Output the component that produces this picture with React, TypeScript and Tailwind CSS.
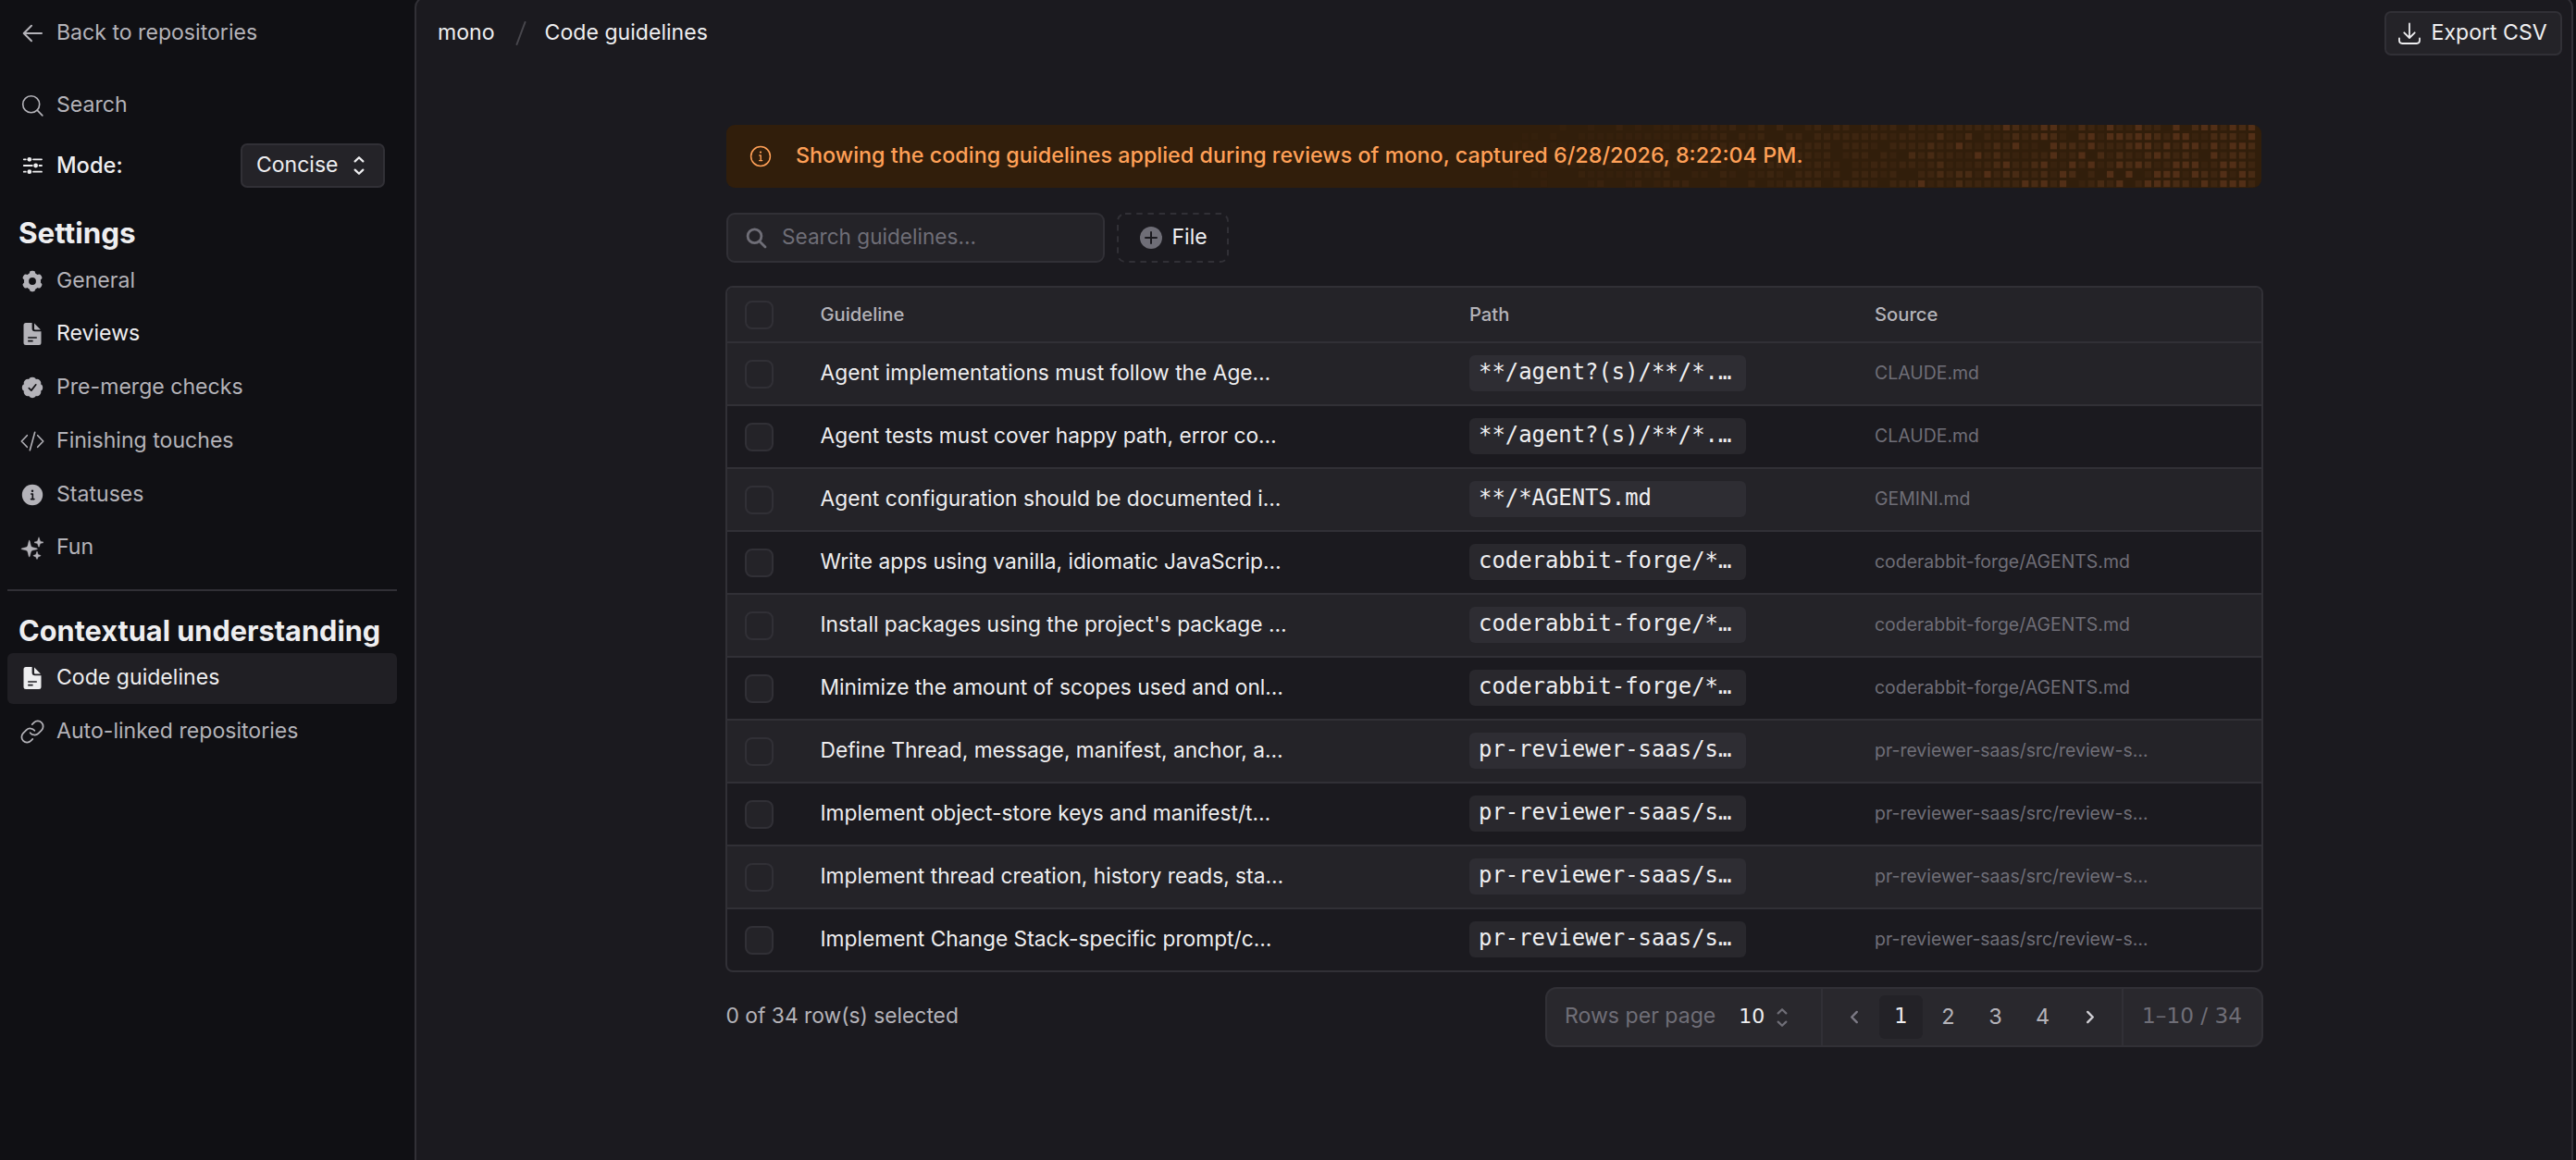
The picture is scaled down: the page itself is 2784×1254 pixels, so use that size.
import type { ReactNode } from "react";
import { Link as LinkIcon } from "lucide-react";
import { clsx } from "clsx";

interface Guideline {
  title: string;
  path: string;
  source: string;
}

const GUIDELINES: Guideline[] = [
  { title: "Agent implementations must follow the Age…", path: "**/agent?(s)/**/*.…", source: "CLAUDE.md" },
  { title: "Agent tests must cover happy path, error co…", path: "**/agent?(s)/**/*.…", source: "CLAUDE.md" },
  { title: "Agent configuration should be documented i…", path: "**/*AGENTS.md", source: "GEMINI.md" },
  { title: "Write apps using vanilla, idiomatic JavaScrip…", path: "coderabbit-forge/*…", source: "coderabbit-forge/AGENTS.md" },
  { title: "Install packages using the project's package …", path: "coderabbit-forge/*…", source: "coderabbit-forge/AGENTS.md" },
  { title: "Minimize the amount of scopes used and onl…", path: "coderabbit-forge/*…", source: "coderabbit-forge/AGENTS.md" },
  { title: "Define Thread, message, manifest, anchor, a…", path: "pr-reviewer-saas/s…", source: "pr-reviewer-saas/src/review-s…" },
  { title: "Implement object-store keys and manifest/t…", path: "pr-reviewer-saas/s…", source: "pr-reviewer-saas/src/review-s…" },
  { title: "Implement thread creation, history reads, sta…", path: "pr-reviewer-saas/s…", source: "pr-reviewer-saas/src/review-s…" },
  { title: "Implement Change Stack-specific prompt/c…", path: "pr-reviewer-saas/s…", source: "pr-reviewer-saas/src/review-s…" },
];

/* ---------- icons ---------- */

function Icon({ children, className }: { children: ReactNode; className?: string }) {
  return (
    <svg
      viewBox="0 0 24 24"
      fill="none"
      stroke="currentColor"
      strokeWidth={1.8}
      strokeLinecap="round"
      strokeLinejoin="round"
      className={clsx("size-6 shrink-0 overflow-visible", className)}
    >
      {children}
    </svg>
  );
}

const ArrowLeftIcon = () => (
  <Icon>
    <path d="M22 12H2.8M11 3.8 2.7 12l8.3 8.2" strokeWidth={2} />
  </Icon>
);

const SearchIcon = () => (
  <Icon>
    <circle cx="10.7" cy="10.7" r="9" strokeWidth={1.6} />
    <path d="m17.2 17.2 5.6 5.6" strokeWidth={1.7} />
  </Icon>
);

const SlidersIcon = () => (
  <Icon>
    <path d="M2.8 5.3h2M13 5.3h9M2.8 12h9M19.6 12H22M2.8 18.7h2M13 18.7h9" />
    <g fill="currentColor" stroke="none">
      <circle cx="8.8" cy="5.3" r="2.4" />
      <circle cx="15.6" cy="12" r="2.4" />
      <circle cx="8.8" cy="18.7" r="2.4" />
    </g>
  </Icon>
);

const GearIcon = () => (
  <Icon>
    <circle cx="12" cy="12" r="6.5" strokeWidth={5.2} />
    <g fill="currentColor" stroke="none">
      {[0, 60, 120, 180, 240, 300].map((a) => (
        <rect key={a} x="8.8" y="0.8" width="6.4" height="6" rx="2.4" transform={`rotate(${a} 12 12)`} />
      ))}
    </g>
  </Icon>
);

const FileIcon = () => (
  <Icon>
    <g stroke="none" fill="currentColor">
      <path
        fillRule="evenodd"
        d="M5 0h6.6v6.3a3 3 0 0 0 3 3h6.9v12.2a2.5 2.5 0 0 1-2.5 2.5H5a2.5 2.5 0 0 1-2.5-2.5v-19A2.5 2.5 0 0 1 5 0Zm2.2 15.2v1.6h9.6v-1.6Zm0 3.6v1.6h5.4v-1.6Z"
      />
      <path d="M14 .6 21 7.4H15a1 1 0 0 1-1-1Z" />
    </g>
  </Icon>
);

const BadgeCheckIcon = () => (
  <Icon>
    <g stroke="none" fill="currentColor">
      <circle cx="12" cy="12" r="9.8" />
      {[0, 45, 90, 135, 180, 225, 270, 315].map((a) => (
        <circle key={a} cx="12" cy="4.9" r="4.1" transform={`rotate(${a} 12 12)`} />
      ))}
    </g>
    <path d="m8.3 12.6 2.5 2.5 5-6.3" stroke="#101014" strokeWidth={1.7} />
  </Icon>
);

const CodeIcon = () => (
  <Icon>
    <path d="M6.3 5.7.3 12l6 6.3M17.7 5.7l6 6.3-6 6.3M14.7 2.3 9.3 21.7" strokeWidth={1.6} />
  </Icon>
);

const InfoFilledIcon = () => (
  <Icon>
    <circle cx="12" cy="12" r="11.2" fill="currentColor" stroke="none" />
    <path d="M10.7 11h1.6v5.5M10.5 16.6h3.4" stroke="#101014" strokeWidth={1.6} />
    <circle cx="12" cy="7.8" r="1.2" fill="#101014" stroke="none" />
  </Icon>
);

const SparklesIcon = () => (
  <Icon>
    <g fill="currentColor" stroke="currentColor" strokeWidth={0.5}>
      <path d="M8.7 4.3c.9 0 1 5.6 2.4 6.8 1.3 1.3 6.4 1.3 6.4 2.2s-5.1 1-6.4 2.2c-1.4 1.3-1.5 6.5-2.4 6.5s-1.1-5.2-2.4-6.5C5 14.3 0 14.2 0 13.3s5-1 6.3-2.2c1.3-1.2 1.5-6.8 2.4-6.8Z" />
      <path d="M19 1.2c.7 0 .8 3 1.5 3.7.6.6 3.5.8 3.5 1.4s-2.9.8-3.5 1.4c-.7.7-.8 3.6-1.5 3.6s-.8-2.9-1.5-3.6C16.9 7.1 14 7 14 6.300s2.900-.8 3.500-1.400c.7-.7.8-3.700 1.500-3.700Z" />
      <path d="M17 16.5c.6 0 .7 2.4 1.3 3 .6.5 2.700.6 2.700 1.200s-2.200.7-2.700 1.200c-.6.6-.7 2.700-1.300 2.700s-.7-2.100-1.300-2.700c-.5-.5-2.700-.6-2.700-1.200s2.200-.7 2.700-1.200c.6-.6.7-3 1.300-3Z" />
    </g>
  </Icon>
);

const DownloadIcon = () => (
  <Icon>
    <path d="M12 1.5v15.300M6.300 11.300l5.700 5.700 5.700-5.700M1 17.500v2.300A3.200 3.200 0 0 0 4.200 23h15.600a3.200 3.200 0 0 0 3.200-3.200v-2.300" />
  </Icon>
);

const InfoIcon = () => (
  <Icon>
    <circle cx="12" cy="12" r="10.4" strokeWidth={1.5} />
    <path d="M10.8 11h1.4v5.6M10.7 16.6h3" strokeWidth={1.4} />
    <circle cx="12" cy="7.6" r="1.1" fill="currentColor" stroke="none" />
  </Icon>
);

function UpDownIcon({ className }: { className?: string }) {
  return (
    <svg
      viewBox="0 0 12 20"
      fill="none"
      stroke="currentColor"
      strokeWidth={2.2}
      strokeLinecap="round"
      strokeLinejoin="round"
      className={clsx("h-5 w-3", className)}
    >
      <path d="M1.7 5.4 6 1.2l4.3 4.2M1.7 14.6 6 18.8l4.3-4.2" />
    </svg>
  );
}

/* ---------- sidebar ---------- */

interface NavItemProps {
  icon: ReactNode;
  label: string;
  active?: boolean;
  bright?: boolean;
}

function NavItem({ icon, label, active, bright }: NavItemProps) {
  return (
    <a
      className={clsx(
        "flex h-[55px] items-center gap-[14px] rounded-[6px] pl-[15px]",
        active ? "bg-[#201f24] text-[#eeeef0]" : "text-[#b4b3b9]",
      )}
    >
      {icon}
      <span className={clsx("-mt-[2px]", bright && "text-[#eeeef0]")}>{label}</span>
    </a>
  );
}

function Sidebar() {
  return (
    <aside className="flex w-[448px] shrink-0 flex-col pl-2 pr-[19px] pt-2 text-[23.1px] leading-7">
      <NavItem icon={<ArrowLeftIcon />} label="Back to repositories" />
      <div className="mt-[23px]">
        <NavItem icon={<SearchIcon />} label="Search" />
      </div>
      <div className="mt-[10px] flex h-[56px] items-center gap-[14px] pl-[15px] pr-[13px] font-medium text-[#eeeef0]">
        <SlidersIcon />
        <span className="text-[23.7px]">Mode:</span>
        <button className="ml-auto flex h-12 w-[156px] items-center justify-between rounded-[7px] border-2 border-[#313036] bg-[#242328] pl-[15px] pr-[20px] text-[23px] font-normal">
          <span className="-mt-[3px]">Concise</span>
          <UpDownIcon />
        </button>
      </div>

      <h2 className="mt-[24px] pl-[12px] text-[31.4px] font-bold leading-[42px] text-[#eeeef0]">Settings</h2>
      <nav className="mt-[3px] flex flex-col gap-[2.8px]">
        <NavItem icon={<GearIcon />} label="General" />
        <NavItem icon={<FileIcon />} label="Reviews" bright />
        <NavItem icon={<BadgeCheckIcon />} label="Pre-merge checks" />
        <NavItem icon={<CodeIcon />} label="Finishing touches" />
        <NavItem icon={<InfoFilledIcon />} label="Statuses" />
        <NavItem icon={<SparklesIcon />} label="Fun" />
      </nav>

      <hr className="mt-[17px] border-t-2 border-[#313036]" />

      <h2 className="mt-[22px] whitespace-nowrap pl-[12px] text-[30.7px] font-bold leading-[42px] text-[#eeeef0]">
        Contextual understanding
      </h2>
      <nav className="mt-[3px] flex flex-col gap-[2.8px]">
        <NavItem icon={<FileIcon />} label="Code guidelines" active />
        <NavItem
          icon={<LinkIcon className="-mx-[2px] size-7 shrink-0" strokeWidth={1.5} />}
          label="Auto-linked repositories"
        />
      </nav>
    </aside>
  );
}

/* ---------- banner ---------- */

// Brightness of each tile at the right end of the banner, 0 (none) to 4.
const TILES = [
  "2112222222432244213214214220403442434",
  "2113113021232343103414434432441133314",
  "2232242123241104332422234424244242443",
  "3232211423211224124031321343232042332",
  "2123111223422341142412434312444124432",
  "0223233142332231430204040144414324143",
  "2412132222224342401232402444331424442",
];
const FADE_COLS = 42;
const PITCH = 10.2;
const TILE_FILL = ["", "#38220e", "#3d2510", "#482b14", "#522f17"];

function tileLevel(row: number, col: number) {
  if (col >= FADE_COLS) return Number(TILES[row][col - FADE_COLS] ?? 0);
  // sparse noise, thickening towards the right
  const n = Math.abs(Math.sin(row * 127.1 + col * 311.7) * 43758.5453) % 1;
  const strength = n * (0.6 + col / FADE_COLS);
  if (strength > 0.7) return 2;
  return strength > 0.3 ? 1 : 0;
}

function BannerTiles() {
  const cols = FADE_COLS + TILES[0].length;
  return (
    <svg className="absolute right-[5px] top-0 h-[68px] w-[806px]" viewBox="0 0 806 68">
      {TILES.map((_, row) =>
        Array.from({ length: cols }, (_, col) => {
          const level = tileLevel(row, col);
          if (level === 0) return null;
          return (
            <rect
              key={`${row}-${col}`}
              x={col * PITCH + 1.4}
              y={row * PITCH - 1.2}
              width={7.2}
              height={7.2}
              fill={TILE_FILL[level]}
              opacity={Math.min(1, 0.45 + col / 50)}
            />
          );
        }),
      )}
    </svg>
  );
}

function Banner() {
  return (
    <div className="relative mx-[1.5px] flex h-[68px] items-center overflow-hidden rounded-[9px] bg-[#311e0b] pl-[25px] text-[#ffa057]">
      <BannerTiles />
      <span className="relative">
        <InfoIcon />
      </span>
      <p className="relative -mt-[3px] ml-[26px] whitespace-nowrap text-[23.35px] font-medium">
        Showing the coding guidelines applied during reviews of mono, captured 6/28/2026, 8:22:04 PM.
      </p>
    </div>
  );
}

/* ---------- table ---------- */

function Filters() {
  return (
    <div className="mx-[1.5px] mt-[27px] flex h-[54px] gap-[13px]">
      <label className="flex w-[409px] items-center rounded-[9px] border-2 border-[#313036] bg-[#242328] pl-[18px] text-[22.6px] text-[#6f6e77]">
        <Icon>
          <circle cx="10.5" cy="10.3" r="7.4" strokeWidth={2.8} />
          <path d="m16 16 6 6" strokeWidth={2.8} />
        </Icon>
        <span className="-mt-[2px] ml-4">Search guidelines…</span>
      </label>
      <button className="relative flex w-[121px] items-center">
        <svg className="absolute inset-0 size-full" fill="none">
          <rect x="1" y="1" width="119" height="52" rx="8" stroke="#313036" strokeWidth="2" strokeDasharray="6.5 5.7" />
        </svg>
        <svg viewBox="0 0 24 24" className="ml-[24.5px] size-6">
          <circle cx="12" cy="12" r="12" fill="#6f6e77" />
          <path d="M12 6v12M6 12h12" stroke="#1b1a1f" strokeWidth="2" strokeLinecap="round" />
        </svg>
        <span className="-mt-[2px] ml-[11px] text-[23px] text-[#eeeef0]">File</span>
      </button>
    </div>
  );
}

function Checkbox() {
  return <span className="ml-[19.5px] block size-[31px] rounded-[8px] border-2 border-[#313036] bg-[#242328]" />;
}

const GRID = "grid grid-cols-[101px_701.5px_438px_1fr] items-center";

function GuidelinesTable() {
  return (
    <div className="mt-[25px] overflow-hidden rounded-[8px] border-2 border-[#313036]">
      <div className={clsx(GRID, "h-[58px] bg-[#242328] text-[20.2px] font-medium text-[#b4b3b9]")}>
        <Checkbox />
        <span>Guideline</span>
        <span>Path</span>
        <span>Source</span>
      </div>
      {GUIDELINES.map((g, i) => (
        <div key={i} className={clsx(GRID, "h-[68px] border-t-2 border-[#313036]", i % 2 === 0 && "bg-[#242328]")}>
          <Checkbox />
          <span className="-mt-[2px] whitespace-nowrap text-[22.75px] text-[#eeeef0]">{g.title}</span>
          <code
            className={clsx(
              "-mt-px block h-[39px] w-[299px] whitespace-nowrap rounded-[6px] pl-[10px] font-['DejaVu_Sans_Mono',monospace] text-[23.9px] leading-[37px] text-[#eeeef0]",
              i % 2 === 0 ? "bg-[#2e2d33]" : "bg-[#29282d]",
            )}
          >
            {g.path}
          </code>
          <span className="text-[19.45px] text-[#6f6e77]">{g.source}</span>
        </div>
      ))}
    </div>
  );
}

function PageButton({ children, active }: { children: ReactNode; active?: boolean }) {
  return (
    <button
      className={clsx(
        "flex h-[47px] w-[47px] items-center justify-center rounded-[6px]",
        active
          ? "bg-[#232227] pb-[2px] font-['DejaVu_Sans',sans-serif] text-[22.5px] text-[#eeeef0]"
          : "pb-[2px] text-[23.5px] text-[#b4b3b9]",
      )}
    >
      {children}
    </button>
  );
}

function Chevron({ d, className }: { d: string; className: string }) {
  return (
    <svg
      viewBox="0 0 8 14"
      fill="none"
      stroke="currentColor"
      strokeWidth={2.6}
      strokeLinecap="round"
      strokeLinejoin="round"
      className={clsx("mt-[2px] h-[13px] w-2 overflow-visible", className)}
    >
      <path d={d} />
    </svg>
  );
}

function TableFooter() {
  return (
    <div className="mt-4 flex items-center justify-between">
      <p className="-mt-[2px] pl-px text-[22.8px] text-[#b4b3b9]">0 of 34 row(s) selected</p>
      <div className="flex h-[65px] w-[775.5px] rounded-[12px] border-2 border-[#313036] bg-[#29282d]">
        <div className="flex w-[298px] items-center border-r-2 border-[#313036] pl-[19px] text-[23.1px] text-[#6f6e77]">
          <span className="-mt-[2px]">Rows per page</span>
          <span className="-mt-[2px] ml-[25px] font-['DejaVu_Sans',sans-serif] text-[22px] text-[#eeeef0]">10</span>
          <UpDownIcon className="ml-[13px]" />
        </div>
        <div className="flex flex-1 items-center gap-1 pl-[10px]">
          <PageButton>
            <Chevron d="M7 1 1 7l6 6" className="text-[#7c7a85]" />
          </PageButton>
          <PageButton active>1</PageButton>
          <PageButton>2</PageButton>
          <PageButton>3</PageButton>
          <PageButton>4</PageButton>
          <PageButton>
            <Chevron d="m1 1 6 6-6 6" className="text-[#d0cfd4]" />
          </PageButton>
        </div>
        <div className="flex w-[151px] items-center justify-center whitespace-nowrap border-l-2 border-[#313036] pb-[2px] font-['DejaVu_Sans',sans-serif] text-[23.2px] text-[#6f6e77]">
          1–10 / 34
        </div>
      </div>
    </div>
  );
}

export default function App() {
  return (
    <div className="flex h-[1254px] w-[2784px] overflow-hidden bg-[#101014] font-['Inter','Liberation_Sans',sans-serif] text-[#eeeef0]">
      <Sidebar />
      <main className="-mt-[4px] mr-[3px] flex flex-1 flex-col rounded-t-[12px] border-2 border-b-0 border-[#313036] bg-[#1b1a1f] pt-[2px]">
        <header className="flex h-[72px] items-center pl-[23px] pr-[10px] text-[23.1px]">
          <span className="-mt-[2px]">mono</span>
          <svg
            viewBox="0 0 12 26"
            className="ml-[22px] h-[26px] w-3"
            stroke="#48474d"
            strokeWidth={2}
            strokeLinecap="round"
          >
            <path d="M10.5 1 1.5 25" />
          </svg>
          <span className="-mt-[2px] ml-[20px]">Code guidelines</span>
          <button className="ml-auto flex h-12 w-[192px] items-center rounded-[7px] border-2 border-[#313036] bg-[#242328] pl-[12.5px]">
            <DownloadIcon />
            <span className="-mt-[2px] ml-[12px] whitespace-nowrap">Export CSV</span>
          </button>
        </header>

        <div className="mx-auto mt-[63px] w-[1662px]">
          <Banner />
          <Filters />
          <GuidelinesTable />
          <TableFooter />
        </div>
      </main>
    </div>
  );
}
